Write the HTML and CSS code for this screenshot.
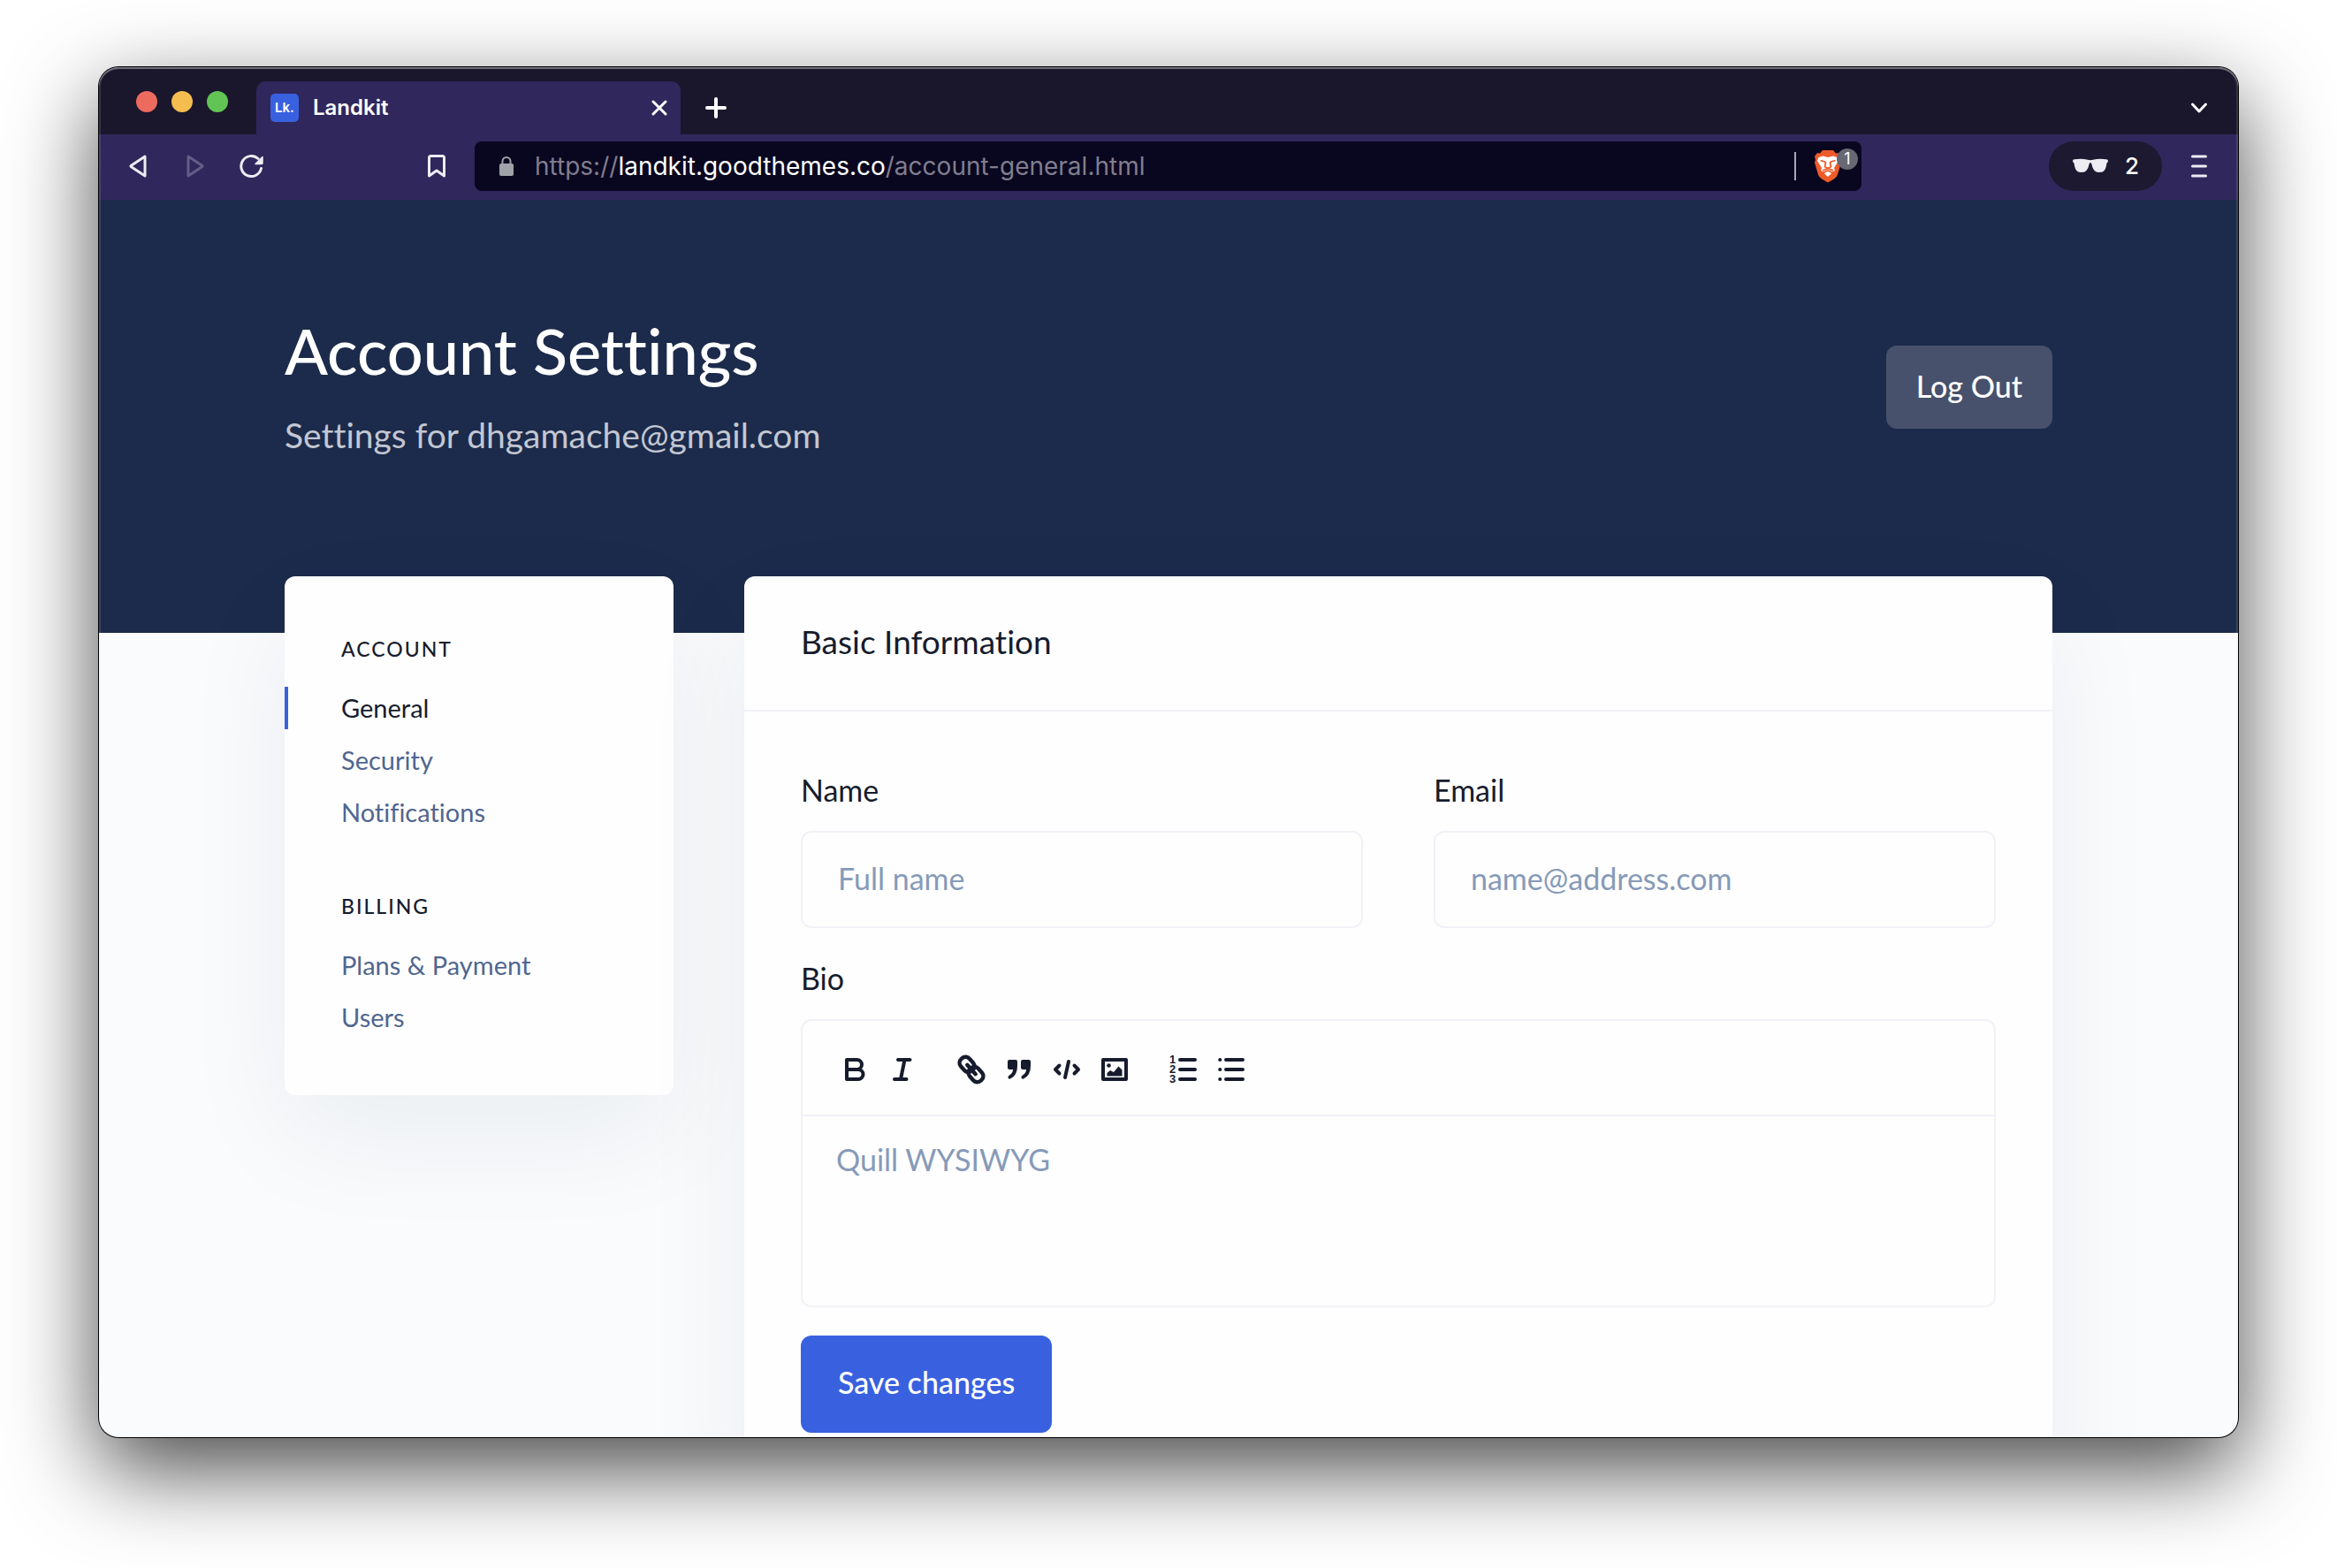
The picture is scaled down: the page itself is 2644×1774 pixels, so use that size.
FILE: index.html
```
<!DOCTYPE html>
<html lang="en">
<head>
<meta charset="utf-8">
<title>Landkit</title>
<meta name="viewport" content="width=device-width, initial-scale=1">
<link rel="stylesheet" href="styles.css">
</head>
<body>
<div class="window">
  <header class="tabs">
    <div class="lights"><span class="light light-red"></span><span class="light light-yellow"></span><span class="light light-green"></span></div>
    <div class="tab">
      <span class="favicon">Lk.</span>
      <span class="tab-title">Landkit</span>
      <button class="icon-btn tab-close" type="button" aria-label="Close tab"><svg width="18" height="18" viewBox="0 0 18 18"><path d="M2 2l14 14M16 2L2 16" stroke="#fff" stroke-width="3" stroke-linecap="round"/></svg></button>
    </div>
    <button class="icon-btn tab-new" type="button" aria-label="New tab"><svg width="24" height="24" viewBox="0 0 24 24"><path d="M12 2v20M2 12h20" stroke="#fff" stroke-width="4" stroke-linecap="round"/></svg></button>
    <button class="icon-btn tab-list" type="button" aria-label="Search tabs"><svg width="20" height="14" viewBox="0 0 20 14"><path d="M2.500 3l7.500 8 7.500-8" fill="none" stroke="#fff" stroke-width="3" stroke-linecap="round" stroke-linejoin="round"/></svg></button>
  </header>
  <nav class="toolbar" aria-label="Browser">
    <button class="icon-btn" type="button" aria-label="Back"><svg width="28" height="28" viewBox="0 0 28 28"><path d="M21 3v22L5.500 14.800q-1.200-.8 0-1.600z" fill="none" stroke="#ececf2" stroke-width="3" stroke-linejoin="round"/></svg></button>
    <button class="icon-btn nav-forward" type="button" aria-label="Forward"><svg width="28" height="28" viewBox="0 0 28 28"><path d="M7 3v22l15.500-10.200q1.200-.8 0-1.600z" fill="none" stroke="#655d88" stroke-width="3" stroke-linejoin="round"/></svg></button>
    <button class="icon-btn nav-reload" type="button" aria-label="Reload"><svg width="28" height="28" viewBox="0 0 28 28"><path d="M25.500 16.500A11.500 11.500 0 1 1 22 5.500" fill="none" stroke="#ececf2" stroke-width="3" stroke-linecap="round"/><path d="M27 3.500v7q0 1-1 1h-7z" fill="#ececf2" stroke="#ececf2" stroke-width="1.500" stroke-linejoin="round"/></svg></button>
    <button class="icon-btn nav-bookmark" type="button" aria-label="Bookmark"><svg width="22" height="28" viewBox="0 0 22 28"><path d="M2.500 4.500q0-2 2-2h13q2 0 2 2V25L11 19l-8.500 6z" fill="none" stroke="#ececf2" stroke-width="3" stroke-linejoin="round"/></svg></button>
    <div class="address">
      <svg class="lock" width="18" height="24" viewBox="0 0 18 24"><rect x="1" y="9" width="16" height="14" rx="2" fill="#9fa3a8"/><path d="M4.500 10V6.500a4.500 4.500 0 0 1 9 0V10" fill="none" stroke="#9fa3a8" stroke-width="2"/></svg>
      <span class="url">https://<span class="url-host">landkit.goodthemes.co</span>/account-general.html</span>
      <span class="address-rule"></span>
      <button class="icon-btn shield" type="button" aria-label="Shields, 1 blocked">
        <svg width="32" height="38" viewBox="0 0 32 38"><path d="M10 1h12l3 3.500 3-.5 3 4-1 4 1 3-4 13.500q-1 3-4 5L16 37.500l-7-4q-3-2-4-5L1 15l1-3-1-4 3-4 3 .5z" fill="#ee5a29"/><path d="M5.500 9l5-1.500L16 9l5.500-1.500 5 1.500 1.500 4-5 8 1 3-5 2.500 1 1L16 31l-4-3.500 1-1L8 24l1-3-5-8z" fill="#fff"/><path d="M7.500 12.500l5 1.500 1 1-1 4.500 3.500 2 3.500-2-1-4.500 1-1 5-1.500M10 24l6-2.500 6 2.500M11.500 26l4.500-2 4.500 2" fill="none" stroke="#ee5a29" stroke-width="1.800"/></svg>
        <span class="shield-count">1</span>
      </button>
    </div>
    <button class="private" type="button"><svg width="42" height="18" viewBox="0 0 42 18"><path d="M1 3q0-1.500 2-1.700Q11-.2 18 1.800q3 .9 6 0Q31-.2 39 1.300q2 .2 2 1.700 0 1.600-1.500 2.500-.8 6-2.500 8-1.500 2.500-6 2.500-4.500 0-6.500-3.500-1.500-2.500-2-5.500-.5-2-1.500-2T19.500 7q-.5 3-2 5.500-2 3.500-6.500 3.500-4.500 0-6-2.500-1.700-2-2.500-8Q1 4.600 1 3z" fill="#ececf2"/></svg><span>2</span></button>
    <button class="icon-btn menu" type="button" aria-label="Menu"><svg width="20" height="28" viewBox="0 0 20 28"><path d="M2.500 3h15M2.500 14h15M2.500 25h15" stroke="#ececf2" stroke-width="3" stroke-linecap="round"/></svg></button>
  </nav>

  <div class="page">
    <header class="hero">
      <div class="container hero-row">
        <div class="hero-text">
          <h1 class="hero-title">Account Settings</h1>
          <p class="hero-sub">Settings for dhgamache@gmail.com</p>
        </div>
        <button class="btn btn-muted" type="button">Log Out</button>
      </div>
    </header>
    <div class="container columns">
      <nav class="card side" aria-label="Settings">
        <section class="side-group">
          <h2 class="side-title">Account</h2>
          <ul class="side-list">
            <li class="side-item side-item-active"><a href="#general">General</a></li>
            <li class="side-item"><a href="#security">Security</a></li>
            <li class="side-item"><a href="#notifications">Notifications</a></li>
          </ul>
        </section>
        <section class="side-group">
          <h2 class="side-title">Billing</h2>
          <ul class="side-list">
            <li class="side-item"><a href="#plans">Plans &amp; Payment</a></li>
            <li class="side-item"><a href="#users">Users</a></li>
          </ul>
        </section>
      </nav>
      <main class="card main">
        <h2 class="card-title">Basic Information</h2>
        <form class="form">
          <div class="form-row">
            <div class="field"><label for="name">Name</label><input class="input" id="name" type="text" placeholder="Full name"></div>
            <div class="field"><label for="email">Email</label><input class="input" id="email" type="email" placeholder="name@address.com"></div>
          </div>
          <div class="field">
            <label for="bio">Bio</label>
            <div class="editor">
              <div class="editor-bar">
                <div class="editor-group">
                  <button class="tool" type="button" aria-label="Bold"><svg width="36" height="36" viewBox="0 0 36 36"><path d="M9 7h11.500a5.250 5.250 0 0 1 0 11H9zM9 18h13a5.500 5.500 0 0 1 0 11H9z" fill="none" stroke="#161c2d" stroke-width="4" stroke-linejoin="round"/></svg></button>
                  <button class="tool" type="button" aria-label="Italic"><svg width="36" height="36" viewBox="0 0 36 36"><path d="M13 7h13.500M9 29h13.500M20.500 7L16 29" fill="none" stroke="#161c2d" stroke-width="4" stroke-linecap="round"/></svg></button>
                </div>
                <div class="editor-group">
                  <button class="tool" type="button" aria-label="Link"><svg width="36" height="36" viewBox="0 0 36 36"><g transform="rotate(48 18 18)" fill="none" stroke="#161c2d" stroke-width="4.500" stroke-linecap="round"><rect x="1.500" y="11.500" width="18" height="13" rx="6"/><rect x="16.500" y="11.500" width="18" height="13" rx="6"/><path d="M11 18h14"/></g></svg></button>
                  <button class="tool" type="button" aria-label="Quote"><svg width="36" height="36" viewBox="0 0 36 36"><path d="M7 7h7q2 0 2 2v5q0 11-8 14.500-2 .6-2.500-1.200-.4-1.500 1.200-2.500Q11 22 11 18H7q-2 0-2-2V9q0-2 2-2zM22 7h7q2 0 2 2v5q0 11-8 14.500-2 .6-2.500-1.200-.4-1.500 1.200-2.500Q26 22 26 18h-4q-2 0-2-2V9q0-2 2-2z" fill="#161c2d"/></svg></button>
                  <button class="tool" type="button" aria-label="Code"><svg width="36" height="36" viewBox="0 0 36 36"><path d="M9.500 13.500L5 18l4.500 4.500M26.500 13.500L31 18l-4.500 4.500M20 9l-4 18" fill="none" stroke="#161c2d" stroke-width="4" stroke-linecap="round" stroke-linejoin="round"/></svg></button>
                  <button class="tool" type="button" aria-label="Image"><svg width="36" height="36" viewBox="0 0 36 36"><rect x="5" y="7" width="26" height="22" fill="none" stroke="#161c2d" stroke-width="4" stroke-linejoin="round"/><circle cx="11.500" cy="13.500" r="2.300" fill="#161c2d"/><path d="M9.500 25.500V22l3.500-3 4 2 5.500-6.500 4 4v7z" fill="#161c2d"/></svg></button>
                </div>
                <div class="editor-group">
                  <button class="tool" type="button" aria-label="Numbered list"><svg width="36" height="36" viewBox="0 0 36 36"><path d="M14 7h17M14 18h17M14 29h17" stroke="#161c2d" stroke-width="4" stroke-linecap="round"/><g class="tool-digits"><text x="2" y="11">1</text><text x="2" y="22">2</text><text x="2" y="33">3</text></g></svg></button>
                  <button class="tool" type="button" aria-label="Bulleted list"><svg width="36" height="36" viewBox="0 0 36 36"><path d="M12 7h19M12 18h19M12 29h19M5.200 7h.1M5.200 18h.1M5.200 29h.1" stroke="#161c2d" stroke-width="4" stroke-linecap="round"/></svg></button>
                </div>
              </div>
              <textarea class="editor-text" id="bio" placeholder="Quill WYSIWYG"></textarea>
            </div>
          </div>
          <button class="btn btn-primary" type="submit">Save changes</button>
        </form>
      </main>
    </div>
  </div>
</div>
</body>
</html>
```
FILE: styles.css
```
* { box-sizing: border-box; }

body {
  margin: 0;
  height: 100vh;
  padding: 76px 112px 148px;
  display: flex;
  background: #fff;
  color: #161c2d;
  font-family: Lato, "Liberation Sans", sans-serif;
  font-size: 34px;
  line-height: 50px;
  font-variant-ligatures: none;
}

h1, h2, p, ul { margin: 0; padding: 0; font-weight: 400; }
ul { list-style: none; }
a { color: inherit; text-decoration: none; }
svg { display: block; flex: none; }
button, input, textarea { font: inherit; color: inherit; }
button { border: 0; background: none; padding: 0; cursor: pointer; }

/* Browser window */
.window {
  position: relative;
  flex: 1;
  min-width: 0;
  display: flex;
  flex-direction: column;
  border-radius: 22px;
  overflow: hidden;
  background: #f9fbfd;
  box-shadow: 0 0 0 1px #000, 0 36px 100px rgba(0, 0, 0, .72);
}
.window::after {
  content: "";
  position: absolute;
  inset: 0;
  border-radius: inherit;
  pointer-events: none;
  box-shadow: inset 0 2px rgba(255, 255, 255, .3), inset 0 0 0 2px rgba(255, 255, 255, .12);
}

.tabs, .toolbar { font-family: Inter, "Liberation Sans", sans-serif; color: #fff; flex: none; }
.icon-btn { display: flex; align-items: center; justify-content: center; }

.tabs {
  display: flex;
  align-items: center;
  height: 76px;
  padding: 16px 34px 0 42px;
  background: #1a172c;
}
.lights { display: flex; gap: 16px; width: 136px; padding-bottom: 14px; }
.light { width: 24px; height: 24px; border-radius: 50%; }
.light-red { background: #ed6a5e; }
.light-yellow { background: #f5bd4f; }
.light-green { background: #61c454; }
.tab {
  display: flex;
  align-items: center;
  width: 480px;
  height: 60px;
  padding: 0 15px 0 16px;
  border-radius: 10px 10px 0 0;
  background: #30275c;
}
.favicon {
  width: 32px;
  height: 32px;
  border-radius: 5px;
  background: #3961df;
  font-size: 15px;
  font-weight: 600;
  line-height: 32px;
  text-align: center;
}
.tab-title { flex: 1; padding-left: 16px; font-size: 24px; font-weight: 600; line-height: 32px; }
.tab-new { margin-left: 28px; }
.tab-list { margin-left: auto; }

.toolbar {
  display: flex;
  align-items: center;
  height: 74px;
  padding: 0 34px 2px 31px;
  background: #30275c;
}
.nav-forward { margin-left: 35px; }
.nav-reload { margin-left: 36px; }
.nav-bookmark { margin-left: 185px; }
.address {
  flex: 1;
  display: flex;
  align-items: center;
  height: 56px;
  margin: 0 212px 0 32px;
  padding: 0 4px 0 27px;
  border-radius: 8px;
  background: #090620;
}
.url { flex: 1; padding-left: 23px; font-size: 28px; line-height: 40px; color: #807e8e; white-space: nowrap; }
.url-host { color: #fff; }
.address-rule { width: 2px; height: 32px; background: #a9a8b2; }
.shield { position: relative; width: 50px; height: 38px; margin-left: 20px; justify-content: flex-start; }
.shield-count {
  position: absolute;
  top: -1px;
  right: 0;
  width: 24px;
  height: 24px;
  border-radius: 50%;
  background: #666873;
  font-size: 18px;
  line-height: 24px;
  text-align: center;
}
.private {
  display: flex;
  align-items: center;
  justify-content: center;
  gap: 18px;
  width: 128px;
  height: 56px;
  border-radius: 28px;
  background: #1c1930;
  font-size: 26px;
  line-height: 32px;
  font-weight: 500;
}
.menu { margin-left: 32px; }

/* Page */
.page { flex: 1; min-height: 0; overflow: hidden; }
.container { width: 100%; max-width: 2000px; margin: 0 auto; }
.hero { padding: 128px 0 194px; background: #1c2b4b; color: #fff; }
.hero-row { display: flex; align-items: center; justify-content: space-between; }
.hero-title { font-size: 72px; line-height: 84px; font-weight: 500; }
.hero-sub { margin-top: 24px; font-size: 39px; line-height: 60px; color: #c3c7d2; }

.btn { border-radius: 12px; color: #fff; font-weight: 500; }
.btn-muted { height: 94px; padding: 0 34px 2px; background: #48516b; }
.btn-primary { height: 110px; padding: 0 42px 4px; background: #3961df; align-self: flex-start; }

.columns { display: grid; grid-template-columns: 440px 1fr; gap: 80px; align-items: start; margin-top: -64px; }
.card {
  border-radius: 12px;
  background: #fefefe;
  box-shadow: 0 48px 128px rgba(22, 28, 45, .06);
}

.side { padding: 64px 0; display: flex; flex-direction: column; gap: 64px; }
.side-title {
  padding-left: 64px;
  font-size: 23px;
  line-height: 36px;
  font-weight: 500;
  letter-spacing: 2px;
  text-transform: uppercase;
}
.side-list { display: flex; flex-direction: column; gap: 11px; margin-top: 25px; }
.side-item { padding-left: 64px; font-size: 29px; line-height: 48px; color: #506690; }
.side-item-active { padding-left: 60px; border-left: 4px solid #3961df; color: #161c2d; }

.card-title { padding: 46px 64px 49px; font-size: 37px; line-height: 56px; border-bottom: 2px solid #f1f2f8; }
.form { display: flex; flex-direction: column; gap: 32px; padding: 64px; }
.form-row { display: grid; grid-template-columns: 1fr 1fr; gap: 80px; }
.field { display: flex; flex-direction: column; gap: 21px; }
.input {
  width: 100%;
  height: 110px;
  padding: 0 40px 4px;
  border: 2px solid #f1f2f8;
  border-radius: 12px;
  background: #fefefe;
}
::placeholder { color: #869ab8; opacity: 1; }
.editor { border: 2px solid #f1f2f8; border-radius: 12px; overflow: hidden; }
.editor-bar { display: flex; gap: 24px; padding: 28px 32px 24px; border-bottom: 2px solid #f1f2f8; }
.editor-group { display: flex; }
.tool { display: flex; align-items: center; justify-content: center; width: 54px; height: 54px; }
.tool-digits { font: 700 13px "Liberation Sans", sans-serif; fill: #161c2d; }
.editor-text {
  display: block;
  width: 100%;
  height: 214px;
  padding: 24px 38px;
  border: 0;
  resize: none;
  background: #fefefe;
}
```
